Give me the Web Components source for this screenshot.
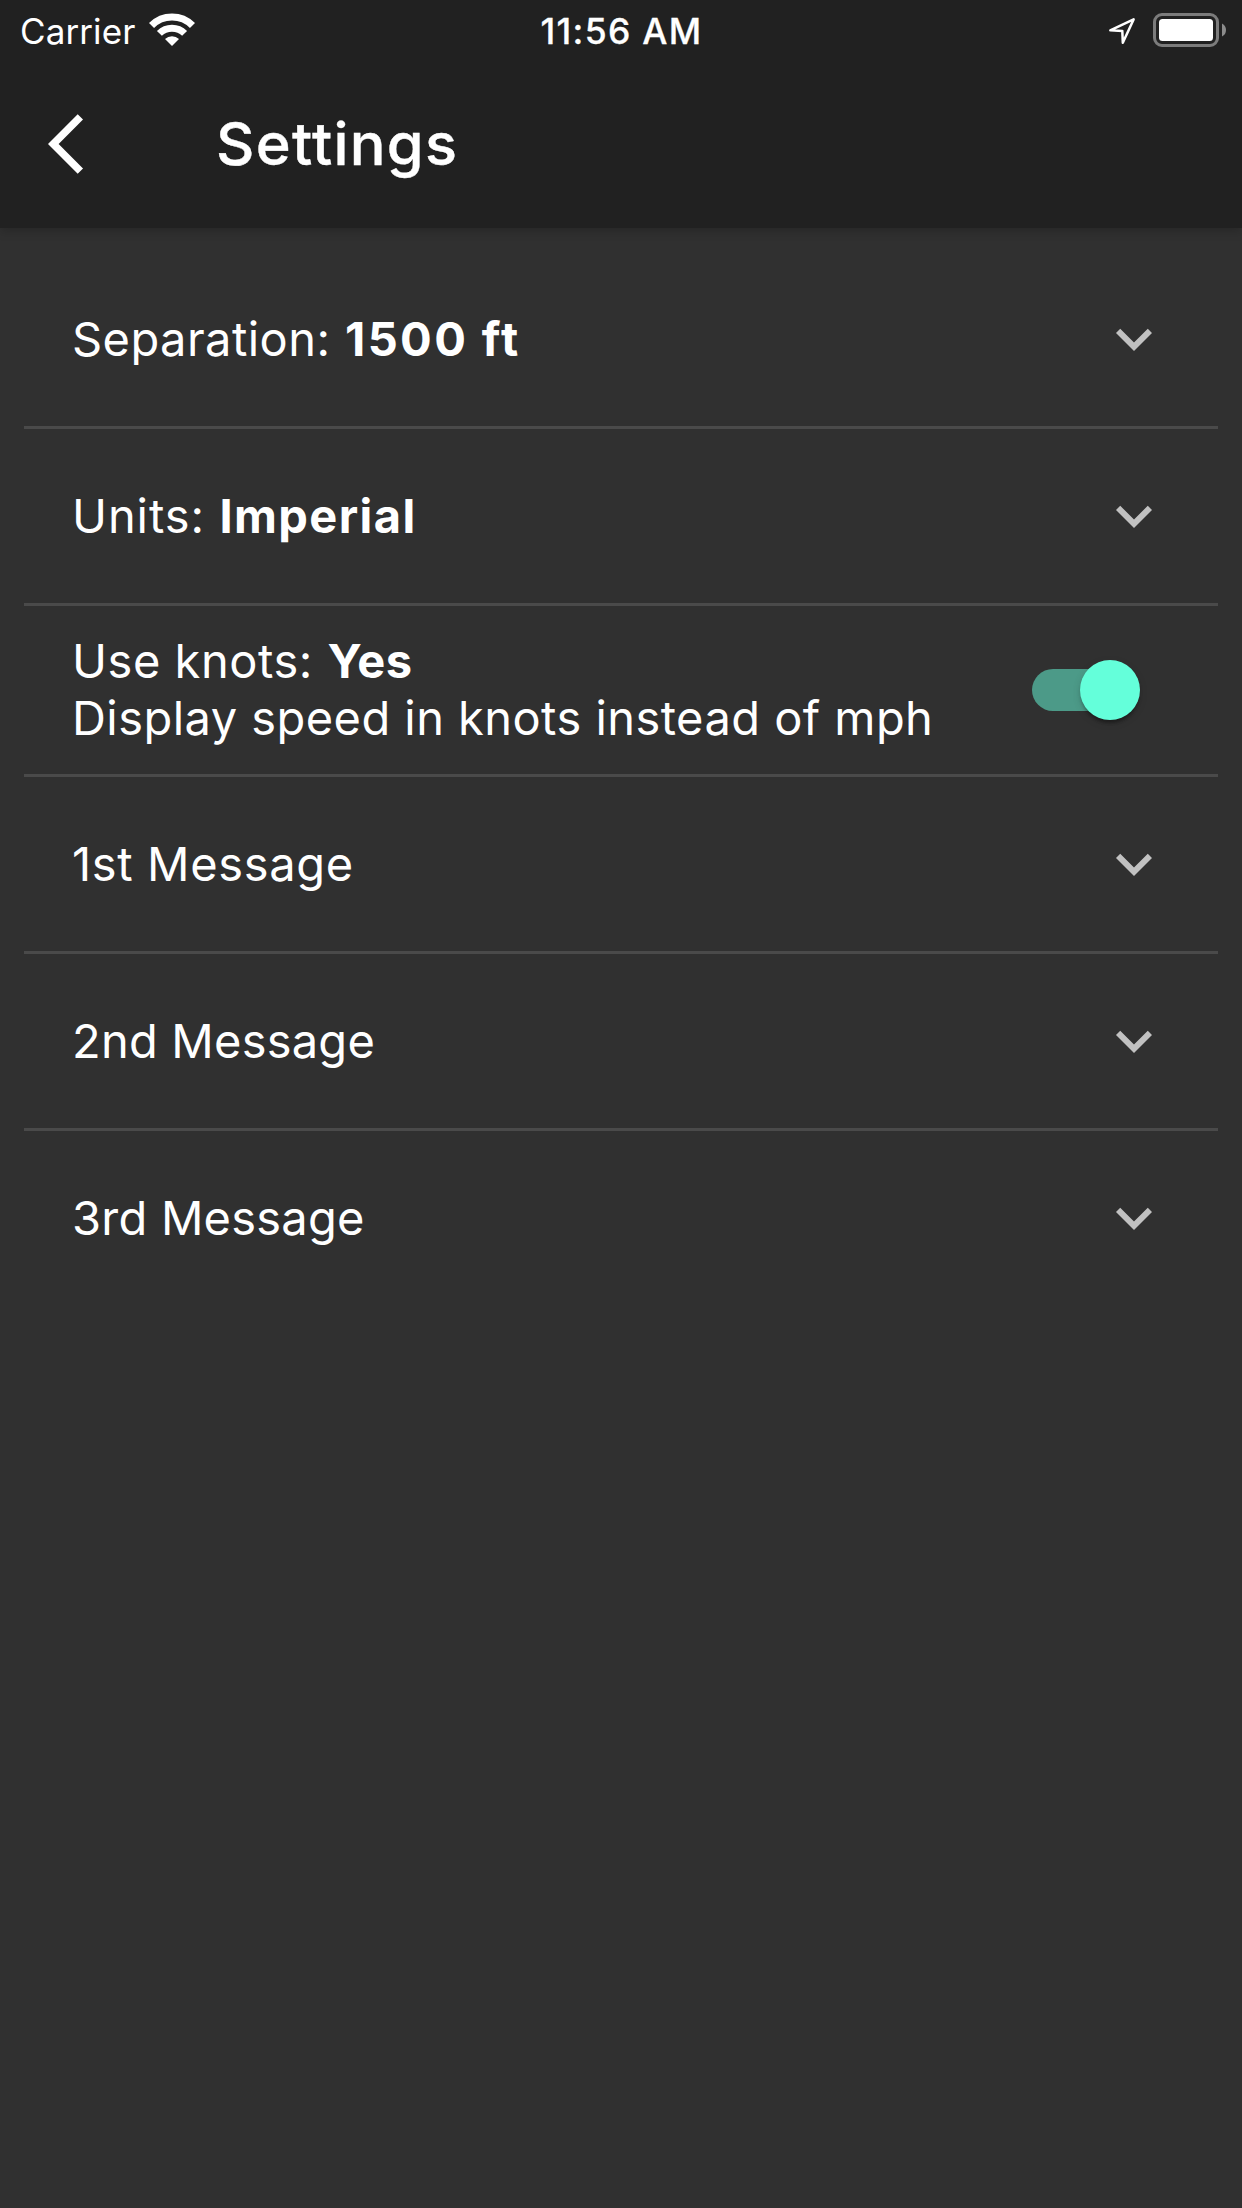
<!DOCTYPE html>
<html lang="en">
<head>
<meta charset="utf-8">
<title>Settings</title>
<style>
html,body{margin:0;height:100%}
body{background:#303030;color:#fff;font-family:Inter,"Liberation Sans",sans-serif;overflow:hidden}
</style>
</head>
<body>
<settings-screen>
  <status-bar slot="top" carrier="Carrier" time="11:56 AM"></status-bar>
  <app-bar slot="top">Settings</app-bar>
  <setting-row style="--ls:.44px;--vs:2.4px">Separation:<span slot="value">1500 ft</span><chevron-icon slot="action"></chevron-icon></setting-row>
  <setting-row style="--ls:.92px;--vs:1.38px">Units:<span slot="value">Imperial</span><chevron-icon slot="action"></chevron-icon></setting-row>
  <setting-row compact style="--ls:.55px;--vs:.5px">Use knots:<span slot="value">Yes</span><span slot="detail">Display speed in knots instead of mph</span><toggle-switch slot="action"></toggle-switch></setting-row>
  <setting-row style="--ls:.65px">1st Message<chevron-icon slot="action"></chevron-icon></setting-row>
  <setting-row style="--ls:.23px">2nd Message<chevron-icon slot="action"></chevron-icon></setting-row>
  <setting-row last style="--ls:.24px">3rd Message<chevron-icon slot="action"></chevron-icon></setting-row>
</settings-screen>
<script>
function define(name, html) {
  const t = document.createElement('template');
  t.innerHTML = html;
  customElements.define(name, class extends HTMLElement {
    constructor() {
      super();
      this.attachShadow({ mode: 'open' }).append(t.content.cloneNode(true));
    }
    connectedCallback() {
      this.shadowRoot.querySelectorAll('[data-attr]').forEach(n => {
        n.textContent = this.getAttribute(n.dataset.attr);
      });
    }
  });
}

define('settings-screen', `
<style>
:host{display:flex;flex-direction:column;height:2208px;width:1242px;background:#303030}
header{height:228px;background:#212121;display:flex;flex-direction:column;box-shadow:0 3px 10px rgba(0,0,0,.2)}
main{padding-top:24px;display:flex;flex-direction:column}
</style>
<header><slot name="top"></slot></header><main><slot></slot></main>`);

define('status-bar', `
<style>
:host{display:grid;grid-template-columns:1fr auto 1fr;height:60px;box-sizing:border-box;padding:2px 16px 0 20px;align-items:center;font-size:35px;line-height:42px}
.l,.r{display:flex;align-items:center}
.l{gap:14px;letter-spacing:.1px}
.r{justify-content:flex-end}
.t{font-size:35.5px;font-weight:500;letter-spacing:1.3px;padding:2px 3px 0 0;-webkit-text-stroke:.3px #fff}
svg{display:block}
.wifi{margin-top:-2px}
.r svg{margin-top:-2px}
</style>
<div class="l"><span data-attr="carrier"></span>
<svg class="wifi" width="46" height="34" viewBox="149 13 46 34"><g fill="none" stroke="#fff"><path d="M151.5 25.5A29 29 0 0 1 192.5 25.5" stroke-width="7.2"/><path d="M159.4 33.4A17.8 17.8 0 0 1 184.6 33.4" stroke-width="7"/></g><path d="M165 39A10.4 10.4 0 0 1 179 39L172 46Z" fill="#fff"/></svg></div>
<div class="t" data-attr="time"></div>
<div class="r"><svg width="118" height="36" viewBox="1108 12 118 36">
<path d="M1110.3 30.3L1133.6 19.4L1122.8 42.8L1122.3 30.9Z" fill="none" stroke="#fff" stroke-width="2.5" stroke-linejoin="round"/>
<rect x="1154.5" y="14.5" width="63" height="31" rx="7.5" fill="none" stroke="#7c7c7c" stroke-width="3"/>
<rect x="1159" y="19" width="54" height="22" rx="3.5" fill="#fff"/>
<path d="M1222 23.5Q1226 25.5 1226 30T1222 36.5Z" fill="#8c8c8c"/>
</svg></div>`);

define('app-bar', `
<style>
:host{display:flex;height:168px;align-items:center;box-sizing:border-box;padding-left:48px;gap:96px}
svg{display:block;width:72px;height:72px;fill:#fff}
h1{margin:0;padding-bottom:2px;font-size:59.5px;font-weight:500;line-height:70px;letter-spacing:1.3px;-webkit-text-stroke:.4px #fff}
</style>
<svg viewBox="0 0 24 24"><path d="M11.67 3.87L9.9 2.1 0 12l9.9 9.9 1.77-1.77L3.54 12z"/></svg>
<h1><slot></slot></h1>`);

define('setting-row', `
<style>
:host{display:flex;align-items:center;justify-content:space-between;height:174px;margin:0 24px;padding:0 48px;border-bottom:3px solid #4a4a4a;font-size:47px;line-height:57px;white-space:nowrap}
:host([compact]){height:168px}
:host([last]){border-bottom-color:transparent}
.text{display:flex;flex-direction:column;padding-bottom:2px}
.head{display:flex;align-items:baseline;gap:14.6px;letter-spacing:var(--ls,0)}
.value{font-weight:700;letter-spacing:var(--vs,0)}
.detail{letter-spacing:.45px}
</style>
<div class="text"><div class="head"><div><slot></slot></div><div class="value"><slot name="value"></slot></div></div><div class="detail"><slot name="detail"></slot></div></div>
<slot name="action"></slot>`);

define('chevron-icon', `
<style>:host{display:block;width:72px;height:72px}svg{display:block;fill:#c1c1c1}</style>
<svg width="72" height="72" viewBox="0 0 24 24"><path d="M16.59 8.59L12 13.17 7.41 8.59 6 10l6 6 6-6z"/></svg>`);

define('toggle-switch', `
<style>
:host{display:flex;align-items:center;width:99px;height:42px;border-radius:21px;background:#4c9a88;margin-right:39px;justify-content:flex-end}
i{display:block;flex:none;width:60px;height:60px;border-radius:50%;background:#64ffda;margin-right:-9px;box-shadow:0 6px 3px -3px rgba(0,0,0,.2),0 3px 3px rgba(0,0,0,.14),0 3px 9px rgba(0,0,0,.12)}
</style><i></i>`);
</script>
</body>
</html>
